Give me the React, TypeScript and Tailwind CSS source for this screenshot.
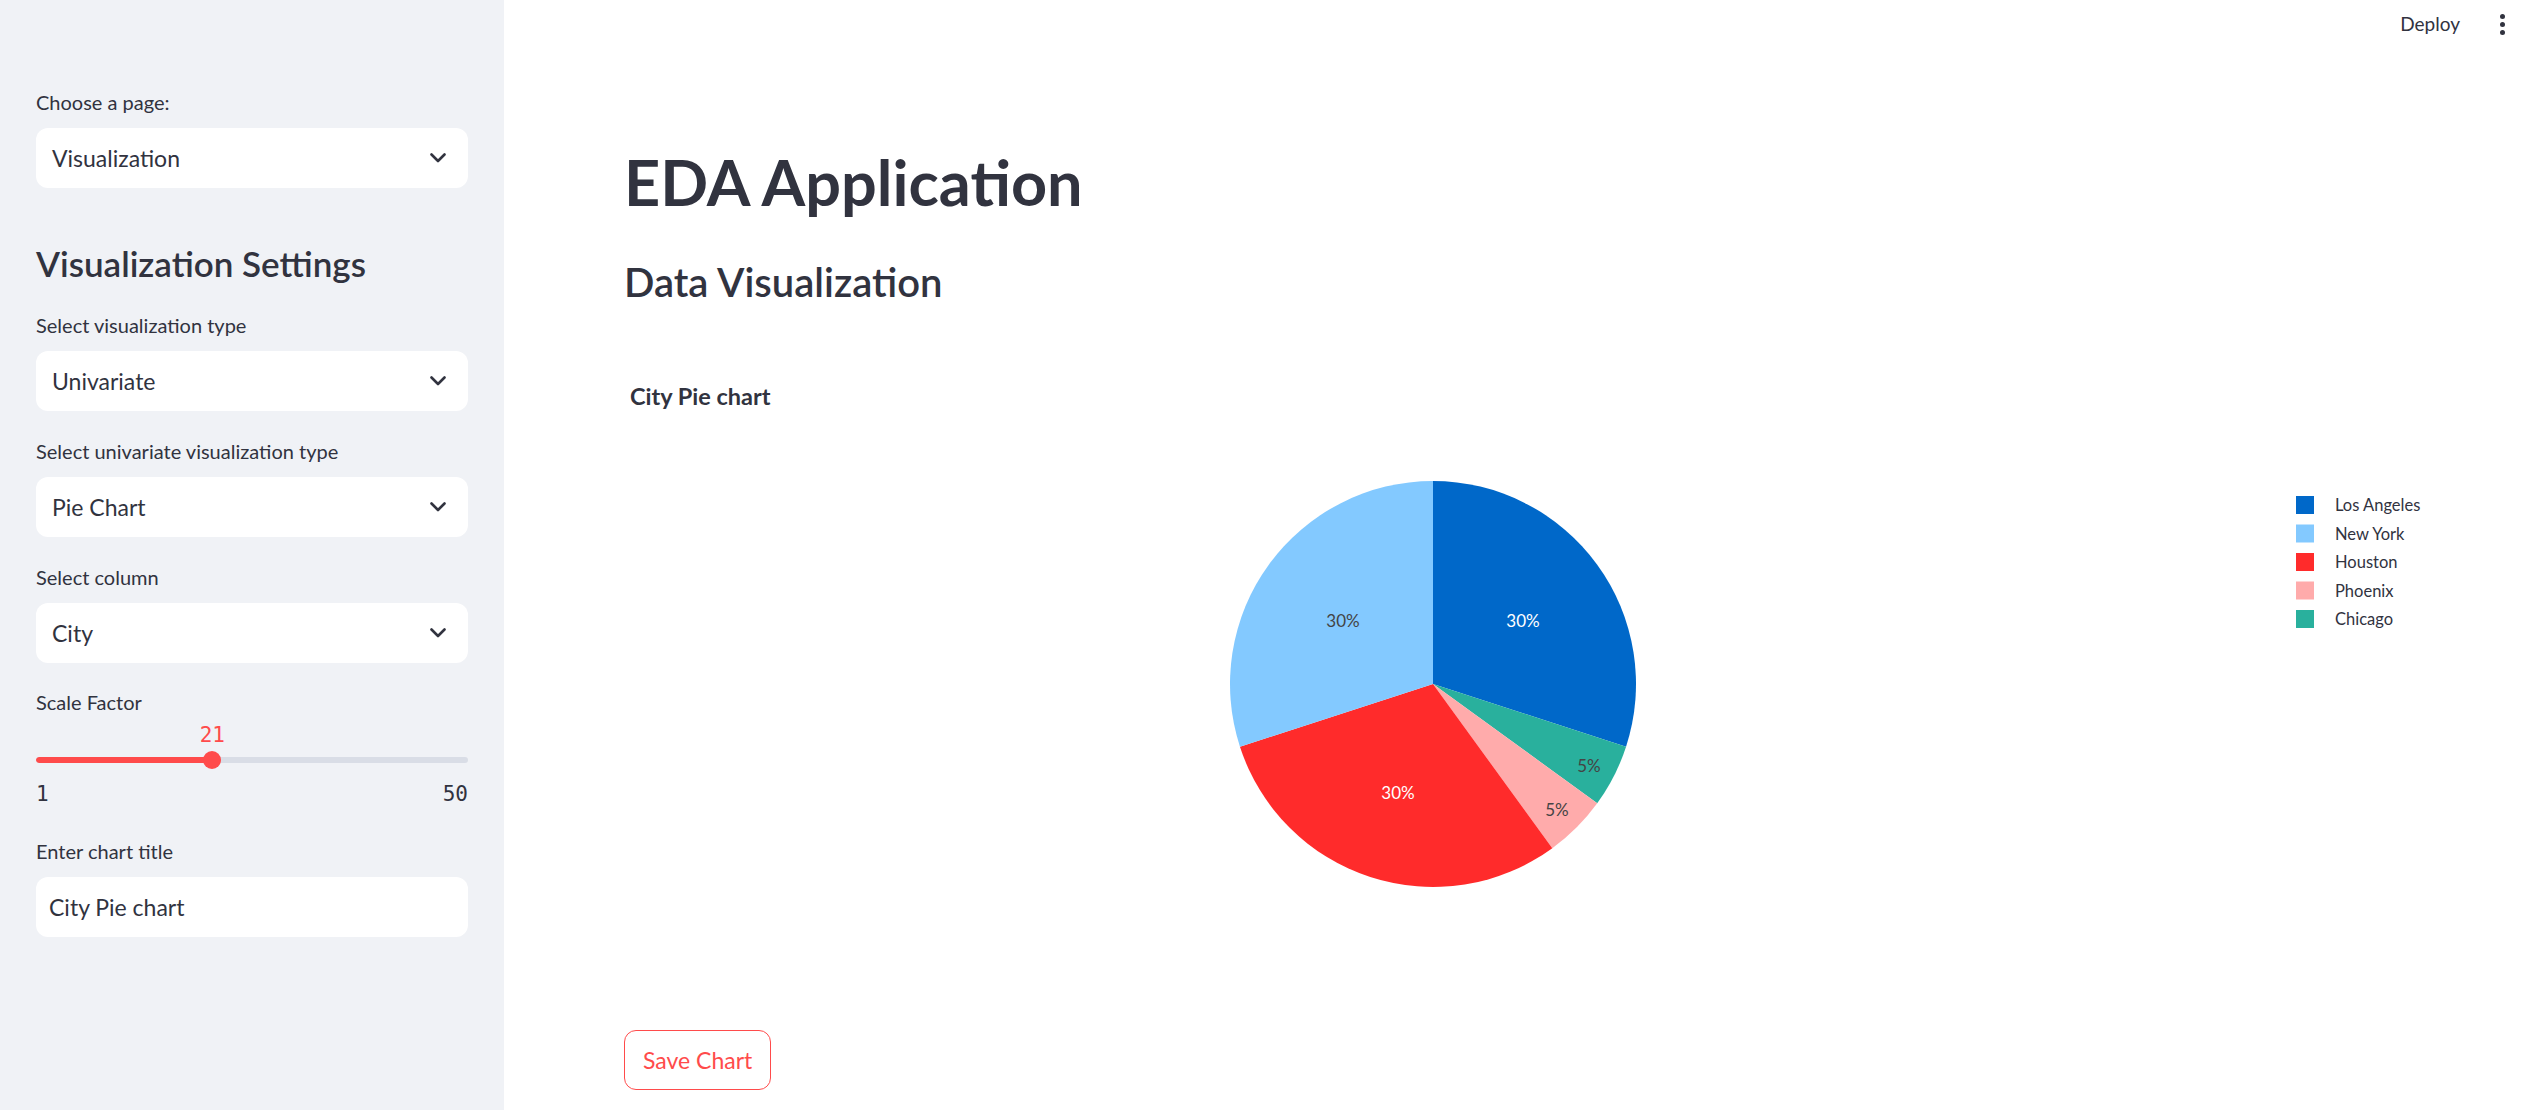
import React from "react";

const Chevron = () => (
  <svg width="16" height="10" viewBox="0 0 16 10" className="shrink-0">
    <path d="M1.5 1.5 L8 8 L14.5 1.5" fill="none" stroke="#31333f" strokeWidth="2.6" strokeLinecap="round" strokeLinejoin="round" />
  </svg>
);

const Label = ({ children }: { children: React.ReactNode }) => (
  <div className="h-[36px] mb-[8px] text-[20px] leading-[36px] text-[#31333f]">{children}</div>
);

const Select = ({ value }: { value: string }) => (
  <div className="h-[60px] rounded-[12px] bg-white flex items-center justify-between pl-[16px] pr-[22px] text-[23px] text-[#31333f]">
    <span>{value}</span>
    <Chevron />
  </div>
);

const cx = 809;
const cy = 353;
const r = 203;
const pt = (deg: number) => {
  const a = (deg * Math.PI) / 180;
  return [cx + r * Math.sin(a), cy - r * Math.cos(a)];
};
const slicePath = (a0: number, a1: number) => {
  const [x0, y0] = pt(a0);
  const [x1, y1] = pt(a1);
  const large = a1 - a0 > 180 ? 1 : 0;
  return `M${cx},${cy} L${x0.toFixed(2)},${y0.toFixed(2)} A${r},${r} 0 ${large} 1 ${x1.toFixed(2)},${y1.toFixed(2)} Z`;
};

const slices = [
  { name: "Los Angeles", color: "#0068c9", a0: 0, a1: 108 },
  { name: "Chicago", color: "#29b09d", a0: 108, a1: 126 },
  { name: "Phoenix", color: "#ffabab", a0: 126, a1: 144 },
  { name: "Houston", color: "#ff2b2b", a0: 144, a1: 252 },
  { name: "New York", color: "#83c9ff", a0: 252, a1: 360 },
];

const labels = [
  { t: "30%", x: 899, y: 289, c: "#ffffff" },
  { t: "30%", x: 719, y: 289, c: "#444444" },
  { t: "30%", x: 774, y: 461, c: "#ffffff" },
  { t: "5%", x: 965, y: 434, c: "#444444" },
  { t: "5%", x: 933, y: 478, c: "#444444" },
];

const legend = [
  { name: "Los Angeles", color: "#0068c9", y: 174 },
  { name: "New York", color: "#83c9ff", y: 202.5 },
  { name: "Houston", color: "#ff2b2b", y: 231 },
  { name: "Phoenix", color: "#ffabab", y: 259.5 },
  { name: "Chicago", color: "#29b09d", y: 288 },
];

export default function App() {
  const pct = (20 / 49) * 100;
  return (
    <div className="flex w-full h-[1110px] overflow-hidden bg-white font-['Lato',sans-serif] text-[#31333f]">
      <aside className="w-[504px] shrink-0 bg-[#f0f2f6] px-[36px] pt-[84px]">
        <Label>Choose a page:</Label>
        <Select value="Visualization" />
        <h2 className="mt-[54px] text-[35px] leading-[42px] font-semibold text-[#31333f]">Visualization Settings</h2>
        <div className="mt-[23px]">
          <Label>Select visualization type</Label>
          <Select value="Univariate" />
        </div>
        <div className="mt-[22px]">
          <Label>Select univariate visualization type</Label>
          <Select value="Pie Chart" />
        </div>
        <div className="mt-[22px]">
          <Label>Select column</Label>
          <Select value="City" />
        </div>
        <div className="mt-[21px]">
          <div className="h-[36px] text-[20px] leading-[36px]">Scale Factor</div>
          <div className="font-['DejaVu_Sans_Mono',monospace]">
            <div className="relative mt-[3px] h-[24px] text-[21px] leading-[24px] text-[#ff4b4b]">
              <span className="absolute top-0 -translate-x-1/2" style={{ left: `${pct}%` }}>21</span>
            </div>
            <div className="relative h-[26px] flex items-center">
              <div className="w-full h-[6px] rounded-full bg-[#d9dde6] overflow-hidden">
                <div className="h-full bg-[#ff4b4b] rounded-full" style={{ width: `${pct}%` }} />
              </div>
              <div
                className="absolute top-[4px] w-[18px] h-[18px] rounded-full bg-[#ff4b4b] -translate-x-1/2"
                style={{ left: `${pct}%` }}
              />
            </div>
            <div className="mt-[9px] h-[24px] flex justify-between text-[21px] leading-[24px] text-[#31333f]">
              <span>1</span>
              <span>50</span>
            </div>
          </div>
        </div>
        <div className="mt-[27px]">
          <Label>Enter chart title</Label>
          <div className="h-[60px] rounded-[12px] bg-white flex items-center pl-[13px] text-[23px] text-[#31333f]">
            City Pie chart
          </div>
        </div>
      </aside>

      <main className="flex-1 min-w-0 flex flex-col">
        <div className="h-[48px] flex items-center justify-end pr-[35px] gap-[40px]">
          <span className="text-[19px] text-[#31333f]">Deploy</span>
          <div className="flex flex-col items-center gap-[3px]">
            <span className="w-[5px] h-[5px] rounded-full bg-[#31333f]" />
            <span className="w-[5px] h-[5px] rounded-full bg-[#31333f]" />
            <span className="w-[5px] h-[5px] rounded-full bg-[#31333f]" />
          </div>
        </div>
        <div className="pl-[120px] pr-[120px] flex flex-col items-start">
          <h1 className="mt-[97px] text-[63px] leading-[74px] font-bold text-[#31333f]">EDA Application</h1>
          <h3 className="mt-[40px] text-[40px] leading-[46px] font-semibold text-[#31333f]">Data Visualization</h3>
          <svg width="1796" height="675" viewBox="0 0 1796 675" className="block mt-[26px] overflow-visible">
            <text x="6" y="65" dominantBaseline="central" fontFamily="Lato, sans-serif" fontWeight="700" fontSize="23.5" fill="#31333f">
              City Pie chart
            </text>
            {slices.map((s) => (
              <path key={s.name} d={slicePath(s.a0, s.a1)} fill={s.color} />
            ))}
            {labels.map((l, i) => (
              <text key={i} x={l.x} y={l.y} textAnchor="middle" dominantBaseline="central" fontFamily="Lato, sans-serif" fontSize="17" fill={l.c}>
                {l.t}
              </text>
            ))}
            {legend.map((l) => (
              <g key={l.name}>
                <rect x="1672" y={l.y - 9} width="18" height="18" fill={l.color} />
                <text x="1711" y={l.y} dominantBaseline="central" fontFamily="Lato, sans-serif" fontSize="16.5" fill="#31333f">
                  {l.name}
                </text>
              </g>
            ))}
          </svg>
          <button className="mt-[24px] h-[60px] px-[18px] rounded-[12px] border border-[#ff4b4b] bg-white text-[23px] text-[#ff4b4b]">
            Save Chart
          </button>
        </div>
      </main>
    </div>
  );
}
